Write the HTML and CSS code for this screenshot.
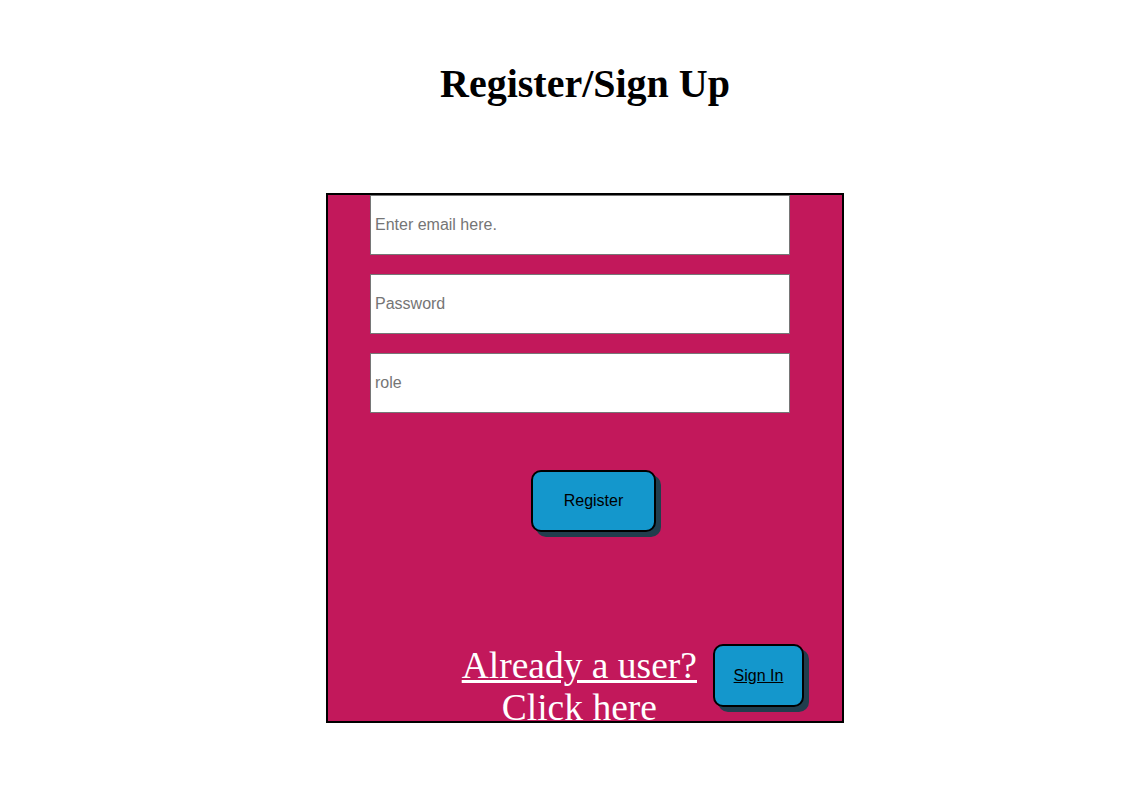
FILE: index.html
```html
<!DOCTYPE html>
<html lang="en">
  <head>
    <meta charset="utf-8">
    <title>Register</title>
    <link rel="stylesheet" href="styles.css">
  </head>
  <body>
    <div class="page">
      <h1 class="title">Register/Sign Up</h1>
      <form class="register-box">
        <input class="field" type="email" placeholder="Enter email here.">
        <input class="field" type="password" placeholder="Password">
        <input class="field" type="text" placeholder="role">
        <button class="btn btn-register" type="button">Register</button>
        <div class="signin-row">
          <a class="signin-link" href="#">Already a user?<br>Click here</a>
          <button class="btn btn-signin" type="button"><u>Sign In</u></button>
        </div>
      </form>
    </div>
  </body>
</html>
```

FILE: styles.css
```css
body {
  margin: 8px;
  font-family: "Liberation Serif", "Times New Roman", serif;
}

.page {
  padding-left: 28px;
}

.title {
  margin: 52px 0 0;
  font-size: 40px;
  font-weight: bold;
  text-align: center;
}

.register-box {
  box-sizing: border-box;
  width: 518px;
  height: 530px;
  margin: 86px auto 0;
  border: 2px solid black;
  background-color: #c2185b;
  overflow: hidden;
}

.field {
  display: block;
  box-sizing: border-box;
  width: 420px;
  height: 60px;
  margin: 0 0 19px 42px;
  padding: 0 4px;
  border: 1px solid #767676;
  font-family: "Liberation Sans", Arial, sans-serif;
  font-size: 16px;
  background: white;
}

.field::placeholder {
  color: #757575;
}

.btn {
  box-sizing: border-box;
  border: 2px solid black;
  border-radius: 10px;
  background-color: #1497cc;
  box-shadow: 5px 5px 0 #213d4d;
  font-family: "Liberation Sans", Arial, sans-serif;
  font-size: 16px;
  color: black;
}

.btn-register {
  display: block;
  width: 125px;
  height: 62px;
  margin: 57px 0 0 203px;
}

.signin-row {
  display: flex;
  justify-content: flex-end;
  align-items: flex-start;
  gap: 16px;
  margin-top: 112px;
  padding-right: 38px;
}

.signin-link {
  flex: none;
  margin-top: 1px;
  font-size: 37.5px;
  line-height: 42px;
  text-align: center;
  color: white;
}

.btn-signin {
  flex: none;
  width: 91px;
  height: 63px;
}
```
